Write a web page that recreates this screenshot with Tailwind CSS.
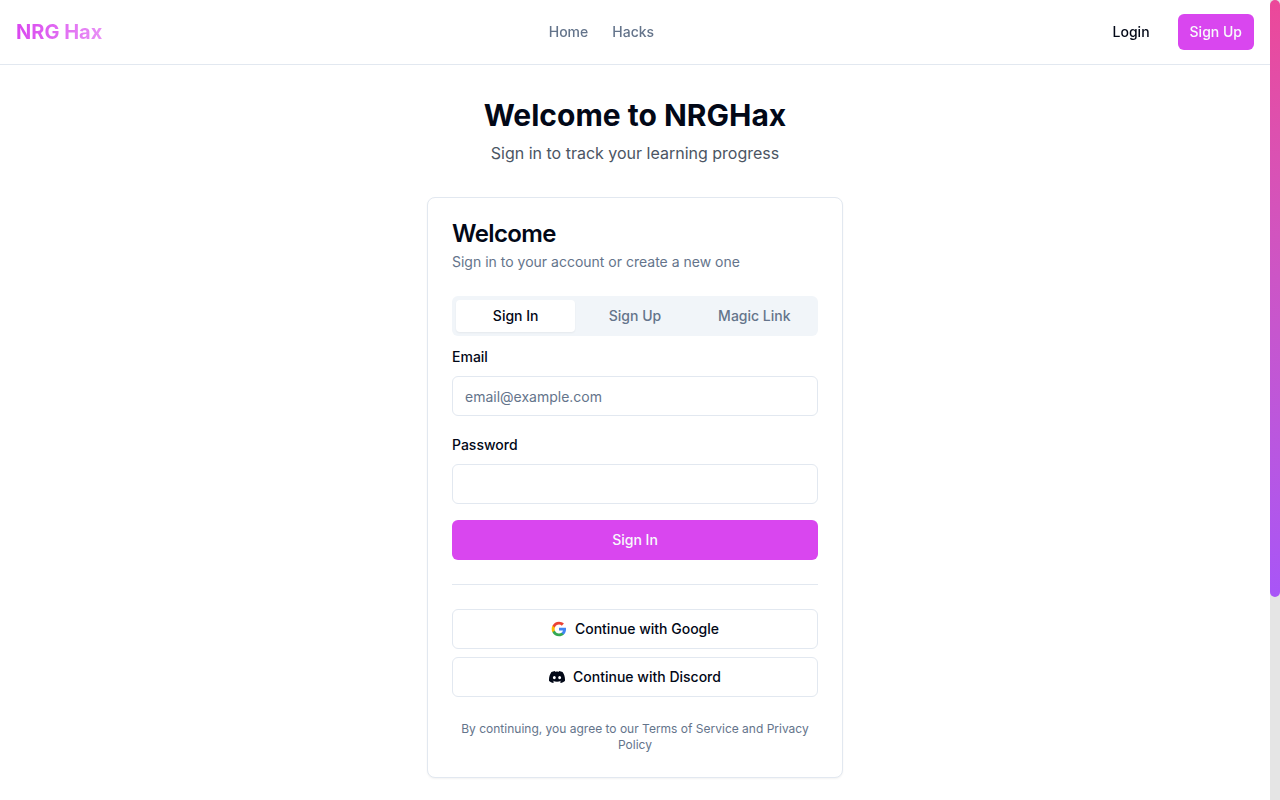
<!DOCTYPE html>
<html lang="en">
<head>
<meta charset="utf-8">
<meta name="viewport" content="width=device-width, initial-scale=1">
<title>NRG Hax</title>
<script src="https://cdn.jsdelivr.net/npm/@tailwindcss/browser@4"></script>
</head>
<body class="flex h-screen overflow-hidden bg-white font-['Inter',sans-serif] text-[#020817]">
<div class="h-full min-w-0 flex-1 overflow-hidden">
  <header class="sticky top-0 z-10 border-b border-[#e2e8f0] bg-white/95 backdrop-blur">
    <div class="flex h-16 items-center justify-between px-4">
      <a href="#" class="bg-linear-to-r from-[#d946ef] to-[#d946ef]/60 bg-clip-text text-xl font-bold text-transparent">NRG Hax</a>
      <nav class="flex items-center gap-6 text-sm font-medium text-[#64748b]">
        <a href="#">Home</a>
        <a href="#">Hacks</a>
      </nav>
      <div class="flex items-center gap-4 text-sm font-medium">
        <a href="#" class="flex h-9 items-center rounded-md px-3">Login</a>
        <a href="#" class="flex h-9 items-center rounded-md bg-[#d946ef] px-3 text-[#f8fafc]">Sign Up</a>
      </div>
    </div>
  </header>
  <main class="mx-auto max-w-md px-4 py-8">
    <div class="mb-8 text-center">
      <h1 class="mb-2 text-3xl font-bold">Welcome to NRGHax</h1>
      <p class="text-[#4b5563]">Sign in to track your learning progress</p>
    </div>
    <section class="rounded-lg border border-[#e2e8f0] bg-white p-6 shadow-xs">
      <h2 class="text-2xl leading-none font-semibold tracking-tight">Welcome</h2>
      <p class="mt-1.5 text-sm text-[#64748b]">Sign in to your account or create a new one</p>
      <div role="tablist" class="mt-6 grid h-10 grid-cols-3 rounded-md bg-[#f1f5f9] p-1 text-sm font-medium text-[#64748b]">
        <button type="button" role="tab" aria-selected="true" class="rounded-sm bg-white text-[#020817] shadow-xs">Sign In</button>
        <button type="button" role="tab" aria-selected="false" class="rounded-sm">Sign Up</button>
        <button type="button" role="tab" aria-selected="false" class="rounded-sm">Magic Link</button>
      </div>
      <form class="mt-2 space-y-4">
        <div class="space-y-2">
          <div><label for="email" class="text-sm leading-none font-medium">Email</label></div>
          <input id="email" type="email" placeholder="email@example.com" class="block h-10 w-full rounded-md border border-[#e2e8f0] bg-white px-3 py-2 text-sm placeholder:text-[#64748b]">
        </div>
        <div class="space-y-2">
          <div><label for="password" class="text-sm leading-none font-medium">Password</label></div>
          <input id="password" type="password" class="block h-10 w-full rounded-md border border-[#e2e8f0] bg-white px-3 py-2 text-sm">
        </div>
        <button type="submit" class="h-10 w-full rounded-md bg-[#d946ef] text-sm font-medium text-[#f8fafc]">Sign In</button>
      </form>
      <hr class="my-6 border-[#e2e8f0]">
      <div class="flex flex-col gap-2 text-sm font-medium">
        <button type="button" class="flex h-10 items-center justify-center gap-2 rounded-md border border-[#e2e8f0]">
          <svg class="size-4" viewBox="0 0 24 24" aria-hidden="true">
            <path fill="#4285F4" d="M22.56 12.25c0-.78-.07-1.53-.2-2.25H12v4.26h5.92c-.26 1.37-1.04 2.53-2.21 3.31v2.77h3.57c2.08-1.92 3.28-4.74 3.28-8.09z"/>
            <path fill="#34A853" d="M12 23c2.97 0 5.46-.98 7.28-2.66l-3.57-2.77c-.98.66-2.23 1.06-3.71 1.06-2.86 0-5.29-1.93-6.16-4.53H2.18v2.84C3.99 20.53 7.7 23 12 23z"/>
            <path fill="#FBBC05" d="M5.84 14.09c-.22-.66-.35-1.36-.35-2.09s.13-1.43.35-2.09V7.07H2.18C1.43 8.55 1 10.22 1 12s.43 3.45 1.18 4.93l2.85-2.22.81-.62z"/>
            <path fill="#EA4335" d="M12 5.38c1.62 0 3.06.56 4.21 1.64l3.15-3.15C17.45 2.09 14.97 1 12 1 7.7 1 3.99 3.47 2.18 7.07l3.66 2.84c.87-2.6 3.3-4.53 6.16-4.53z"/>
          </svg>
          Continue with Google
        </button>
        <button type="button" class="flex h-10 items-center justify-center gap-2 rounded-md border border-[#e2e8f0]">
          <svg class="size-4" viewBox="0 0 24 24" fill="currentColor" aria-hidden="true">
            <path d="M20.317 4.37a19.791 19.791 0 0 0-4.885-1.515.074.074 0 0 0-.079.037c-.21.375-.444.864-.608 1.25a18.27 18.27 0 0 0-5.487 0 12.64 12.64 0 0 0-.617-1.25.077.077 0 0 0-.079-.037A19.736 19.736 0 0 0 3.677 4.37a.07.07 0 0 0-.032.027C.533 9.046-.32 13.58.099 18.057a.082.082 0 0 0 .031.057 19.9 19.9 0 0 0 5.993 3.03.078.078 0 0 0 .084-.028c.462-.63.874-1.295 1.226-1.994a.076.076 0 0 0-.041-.106 13.107 13.107 0 0 1-1.872-.892.077.077 0 0 1-.008-.128 10.2 10.2 0 0 0 .372-.292.074.074 0 0 1 .077-.01c3.928 1.793 8.18 1.793 12.062 0a.074.074 0 0 1 .078.01c.12.098.246.198.373.292a.077.077 0 0 1-.006.127 12.299 12.299 0 0 1-1.873.892.077.077 0 0 0-.041.107c.36.698.772 1.362 1.225 1.993a.076.076 0 0 0 .084.028 19.839 19.839 0 0 0 6.002-3.03.077.077 0 0 0 .032-.054c.5-5.177-.838-9.674-3.549-13.66a.061.061 0 0 0-.031-.03zM8.02 15.33c-1.183 0-2.157-1.085-2.157-2.419 0-1.333.956-2.419 2.157-2.419 1.21 0 2.176 1.096 2.157 2.42 0 1.333-.956 2.418-2.157 2.418zm7.975 0c-1.183 0-2.157-1.085-2.157-2.419 0-1.333.955-2.419 2.157-2.419 1.21 0 2.176 1.096 2.157 2.42 0 1.333-.946 2.418-2.157 2.418z"/>
          </svg>
          Continue with Discord
        </button>
      </div>
      <p class="mt-6 text-center text-xs text-[#64748b]">By continuing, you agree to our Terms of Service and Privacy Policy</p>
    </section>
  </main>
</div>
<!-- Scroll track and thumb -->
<div class="h-full w-2.5 shrink-0 bg-[#e5e5e5]" aria-hidden="true">
  <div class="w-full rounded-full bg-linear-to-b from-[#ec4899] to-[#a855f7]" style="height:74.6%"></div>
</div>
</body>
</html>
